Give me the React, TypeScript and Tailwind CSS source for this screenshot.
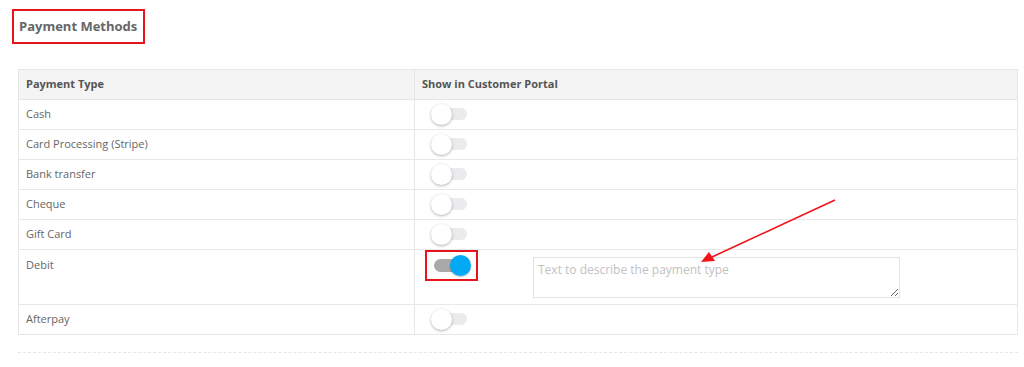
const rows = [
  { name: "Cash", on: false },
  { name: "Card Processing (Stripe)", on: false },
  { name: "Bank transfer", on: false },
  { name: "Cheque", on: false },
  { name: "Gift Card", on: false },
  { name: "Debit", on: true },
  { name: "Afterpay", on: false },
];

function Toggle({ on }: { on: boolean }) {
  if (on) {
    return (
      <div className="relative w-[40px] h-[22px] shrink-0">
        <div className="absolute left-[3px] top-[4px] w-[35px] h-[13px] rounded-full bg-[#a9a9a9]" />
        <div className="absolute left-[19px] top-0 w-[21px] h-[21px] rounded-full bg-[#03a9f4] shadow-[0_1px_2px_rgba(0,0,0,0.25)]" />
        {/* annotation box */}
        <div className="absolute -left-[6px] -top-[5px] w-[53px] h-[31px] border-2 border-[#e8141b]" />
      </div>
    );
  }
  return (
    <div className="relative w-[40px] h-[21px] shrink-0">
      <div className="absolute left-[8px] top-[4px] w-[28px] h-[12px] rounded-full bg-[#ebebed]" />
      <div className="absolute left-0 top-0 w-[21px] h-[21px] rounded-full bg-white shadow-[0_1px_3px_rgba(0,0,0,0.3)]" />
    </div>
  );
}

export default function App() {
  return (
    <div className="relative w-[1024px] h-[367px] bg-white font-['Open_Sans',sans-serif] overflow-hidden">
      <div className="pt-[9px] pl-[12px]">
        <div className="inline-flex items-center h-[35px] border-2 border-[#e8141b] pl-[5px] pr-[6px]">
          <h1 className="text-[13px] font-bold text-[#666]">Payment Methods</h1>
        </div>
      </div>

      <div className="ml-[18px] mr-[6px] mt-[25px] border border-[#e6e6e6] text-[11px]">
        <div className="flex h-[30px] bg-[#f4f4f4] border-b border-[#e6e6e6] font-bold text-[#555]">
          <div className="w-[396px] flex items-center pl-[7px] border-r border-[#e6e6e6]">Payment Type</div>
          <div className="flex-1 flex items-center pl-[7px]">Show in Customer Portal</div>
        </div>
        {rows.map((r, i) => (
          <div
            key={r.name}
            className={`flex text-[#666] ${i < rows.length - 1 ? "border-b border-[#e8e8e8]" : ""}`}
          >
            {r.on ? (
              <>
                <div className="w-[396px] h-[54px] pl-[7px] pt-[7px] border-r border-[#e6e6e6]">{r.name}</div>
                <div className="flex-1 flex items-start pl-[16px] pt-[5px]">
                  <Toggle on />
                  <textarea
                    placeholder="Text to describe the payment type"
                    className="ml-[62px] mt-[2px] w-[367px] h-[41px] border border-[#e3e3e3] px-[4px] py-[3px] text-[12px] placeholder:text-[#c2c2c2] outline-none"
                  />
                </div>
              </>
            ) : (
              <>
                <div className="w-[396px] h-[29px] flex items-center pl-[7px] border-r border-[#e6e6e6]">{r.name}</div>
                <div className="flex-1 flex items-center pl-[16px]">
                  <Toggle on={false} />
                </div>
              </>
            )}
          </div>
        ))}
      </div>

      <div className="ml-[18px] mr-[6px] mt-[17px] border-t border-dashed border-[#e6e6e6]" />

      {/* annotation arrow */}
      <svg className="absolute left-0 top-0 pointer-events-none" width="1024" height="367">
        <line x1="835" y1="200" x2="712" y2="257" stroke="#f0141b" strokeWidth="1.6" />
        <polygon points="701,262 709,252 715,261" fill="#f0141b" />
      </svg>
    </div>
  );
}
